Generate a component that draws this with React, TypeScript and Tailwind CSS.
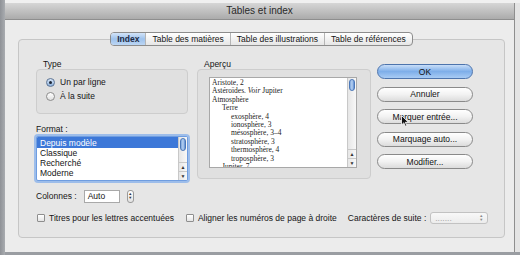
import type { ReactNode } from 'react';

const tabs = ['Index', 'Table des matières', 'Table des illustrations', 'Table de références'];
const formats = ['Depuis modèle', 'Classique', 'Recherché', 'Moderne'];
const preview: [string, number, boolean?][] = [
  ['Aristote, 2', 0],
  ['Astéroïdes.', 0, true],
  ['Atmosphère', 0],
  ['Terre', 1],
  ['exosphère, 4', 2],
  ['ionosphère, 3', 2],
  ['mésosphère, 3–4', 2],
  ['stratosphère, 3', 2],
  ['thermosphère, 4', 2],
  ['troposphère, 3', 2],
  ['Jupiter, 7', 1],
];
const buttons = ['Annuler', 'Marquer entrée...', 'Marquage auto...', 'Modifier...'];

function Radio({ on, label }: { on?: boolean; label: string }) {
  return (
    <div className="flex items-center h-[14px]">
      <span
        className={
          on
            ? 'w-[9px] h-[9px] rounded-full border border-[#5d7494] bg-gradient-to-b from-[#d7e6f7] to-[#8fb2dc] flex items-center justify-center'
            : 'w-[9px] h-[9px] rounded-full border border-[#8c8c8c] bg-gradient-to-b from-white to-[#e0e0e0]'
        }
      >
        {on ? <span className="w-[3px] h-[3px] rounded-full bg-[#1d2635]" /> : null}
      </span>
      <span className="ml-[5px]">{label}</span>
    </div>
  );
}

function Check({ label }: { label: string }) {
  return (
    <div className="flex items-center">
      <span className="w-[8px] h-[8px] rounded-[1px] border border-[#8e8e8e] bg-gradient-to-b from-white to-[#e4e4e4]" />
      <span className="ml-[4px]">{label}</span>
    </div>
  );
}

function Scroll({ thumbH }: { thumbH: number }) {
  return (
    <div className="w-[9px] h-full flex flex-col bg-gradient-to-r from-[#e6e6e6] to-[#f8f8f8] border-l border-[#c8c8c8]">
      <div
        className="mx-[1px] mt-[1px] rounded-full bg-gradient-to-r from-[#7ea6dd] via-[#b9d3f2] to-[#5d8bd0] border border-[#4c78b8]"
        style={{ height: thumbH }}
      />
      <div className="flex-1" />
      <div className="h-[9px] flex items-center justify-center text-[5px] text-[#333] border-t border-[#c8c8c8]">▲</div>
      <div className="h-[9px] flex items-center justify-center text-[5px] text-[#333] border-t border-[#c8c8c8]">▼</div>
    </div>
  );
}

function PillButton({ children, primary }: { children: ReactNode; primary?: boolean }) {
  return (
    <div
      className={
        primary
          ? 'h-[15px] rounded-full border border-[#4d74ad] bg-gradient-to-b from-[#c9def8] via-[#7eaee9] to-[#a8cbf4] flex items-center justify-center text-[#111]'
          : 'h-[15px] rounded-full border border-[#8a8a8a] bg-gradient-to-b from-white via-[#f2f2f2] to-[#dcdcdc] flex items-center justify-center text-[#111]'
      }
    >
      {children}
    </div>
  );
}

export default function App() {
  return (
    <div className="w-[520px] h-[255px] bg-[#a2a5aa] flex text-[8.5px] leading-[10px] text-[#151515] font-['Liberation_Sans',Arial,sans-serif]">
      <div className="w-[5px] bg-gradient-to-r from-[#8f9297] to-[#a9acb0]" />
      <div className="flex-1 flex flex-col">
        <div className="h-[3px] bg-[#f0f0f0]" />
        <div className="flex flex-1">
          <div className="w-[509px] flex flex-col">
            {/* title bar */}
            <div className="h-[17px] bg-gradient-to-b from-[#d6d6d6] to-[#ababab] border-b border-[#8e8e8e] flex items-center justify-center text-[10px] text-[#2a2a2a]">
              Tables et index
            </div>

            {/* body */}
            <div className="flex-1 bg-[#ececec] pt-[12px] pl-[13px] pr-[9px] pb-[14px] flex flex-col">
              <div className="relative z-10 flex justify-center">
                <div className="flex h-[14px] rounded-[4px] border border-[#8c8c8c] bg-gradient-to-b from-white to-[#e6e6e6] overflow-hidden">
                  {tabs.map((t, i) => (
                    <div
                      key={t}
                      className={
                        i === 0
                          ? 'px-[6px] flex items-center bg-gradient-to-b from-[#d3e4f8] via-[#9ec2ec] to-[#bcd6f4] font-bold text-[#1d2b44]'
                          : 'px-[6px] flex items-center border-l border-[#b5b5b5]'
                      }
                    >
                      {t}
                    </div>
                  ))}
                </div>
              </div>

              <div className="-mt-[7px] flex-1 rounded-[4px] border border-[#c6c6c6] bg-[#e6e6e6] pt-[19px] pl-[17px] flex flex-col">
                <div className="flex">
                  {/* left column */}
                  <div className="w-[152px] flex flex-col">
                    <div className="pl-[7px] h-[10px]">Type</div>
                    <div className="h-[45px] rounded-[4px] border border-[#cdcdcd] bg-[#e0e0e0] pl-[9px] pt-[5px] flex flex-col">
                      <Radio on label="Un par ligne" />
                      <Radio label="À la suite" />
                    </div>
                    <div className="mt-[10px] h-[10px]">Format :</div>
                    <div className="mt-[2px] h-[45px] rounded-[2px] border border-[#6f9de0] shadow-[0_0_0_2px_#9dbdea] bg-white flex overflow-hidden">
                      <div className="flex-1 flex flex-col">
                        {formats.map((f, i) => (
                          <div
                            key={f}
                            className={
                              i === 0
                                ? 'h-[11px] pl-[3px] flex items-center bg-[#3d78d8] text-white'
                                : 'h-[10px] pl-[3px] flex items-center'
                            }
                          >
                            {f}
                          </div>
                        ))}
                      </div>
                      <Scroll thumbH={13} />
                    </div>
                  </div>

                  {/* middle column */}
                  <div className="ml-[9px] w-[174px] flex flex-col">
                    <div className="pl-[7px] h-[10px]">Aperçu</div>
                    <div className="h-[110px] rounded-[4px] border border-[#cdcdcd] bg-[#e0e0e0] pl-[11px] pr-[13px] pt-[7px] pb-[10px]">
                      <div className="h-full bg-white border border-[#a8a8a8] flex overflow-hidden">
                        <div className="flex-1 pl-[2px] pt-[1px] font-['Liberation_Serif','Times_New_Roman',serif] text-[7.5px] leading-[8.4px] text-[#222] overflow-hidden">
                          {preview.map(([t, lvl, see]) => (
                            <div
                              key={t}
                              className={lvl === 0 ? 'whitespace-nowrap' : lvl === 1 ? 'pl-[10px] whitespace-nowrap' : 'pl-[19px] whitespace-nowrap'}
                            >
                              {t}
                              {see ? (
                                <>
                                  {' '}
                                  <i>Voir</i> Jupiter
                                </>
                              ) : null}
                            </div>
                          ))}
                        </div>
                        <Scroll thumbH={12} />
                      </div>
                    </div>
                  </div>

                  {/* buttons */}
                  <div className="relative ml-[6px] w-[96px] pt-[5px] flex flex-col gap-[7.5px]">
                    <PillButton primary>OK</PillButton>
                    {buttons.map((b) => (
                      <PillButton key={b}>{b}</PillButton>
                    ))}
                    <svg className="absolute left-[24px] top-[56px]" width="8" height="12" viewBox="0 0 8 12">
                      <path d="M0.5 0.5 L0.5 10 L2.8 7.8 L4.4 11.3 L5.8 10.7 L4.3 7.3 L7.4 7.3 Z" fill="#111" stroke="#fff" strokeWidth="0.8" />
                    </svg>
                  </div>
                </div>

                {/* Colonnes */}
                <div className="mt-[8px] flex items-center h-[14px]">
                  <span>Colonnes :</span>
                  <div className="ml-[7px] w-[36px] h-[13px] bg-white border border-[#a9a9a9] pl-[3px] flex items-center">Auto</div>
                  <div className="ml-[7px] w-[7px] h-[13px] rounded-[3px] border border-[#9a9a9a] bg-gradient-to-b from-white to-[#e2e2e2] flex flex-col items-center justify-center text-[4px] leading-[4px] text-[#333]">
                    <span>▲</span>
                    <span>▼</span>
                  </div>
                </div>

                {/* checkboxes */}
                <div className="mt-[9px] flex items-center h-[12px]">
                  <div className="pl-[1px]">
                    <Check label="Titres pour les lettres accentuées" />
                  </div>
                  <div className="ml-[12px]">
                    <Check label="Aligner les numéros de page à droite" />
                  </div>
                  <span className="ml-[11px]">Caractères de suite :</span>
                  <div className="ml-[4px] w-[58px] h-[12px] rounded-[3px] border border-[#c2c2c2] bg-gradient-to-b from-[#f8f8f8] to-[#ececec] flex items-center pl-[4px] pr-[4px] text-[#a8a8a8]">
                    <span className="flex-1 leading-[6px]">.......</span>
                    <span className="flex flex-col text-[4px] leading-[4px] text-[#8a8a8a]">
                      <span>▲</span>
                      <span>▼</span>
                    </span>
                  </div>
                </div>
              </div>
            </div>
          </div>
          <div className="flex-1 bg-[#e4e4e4] border-l border-[#8e8e8e]" />
        </div>
        <div className="h-[3px] bg-[#9a9da2]" />
      </div>
    </div>
  );
}
